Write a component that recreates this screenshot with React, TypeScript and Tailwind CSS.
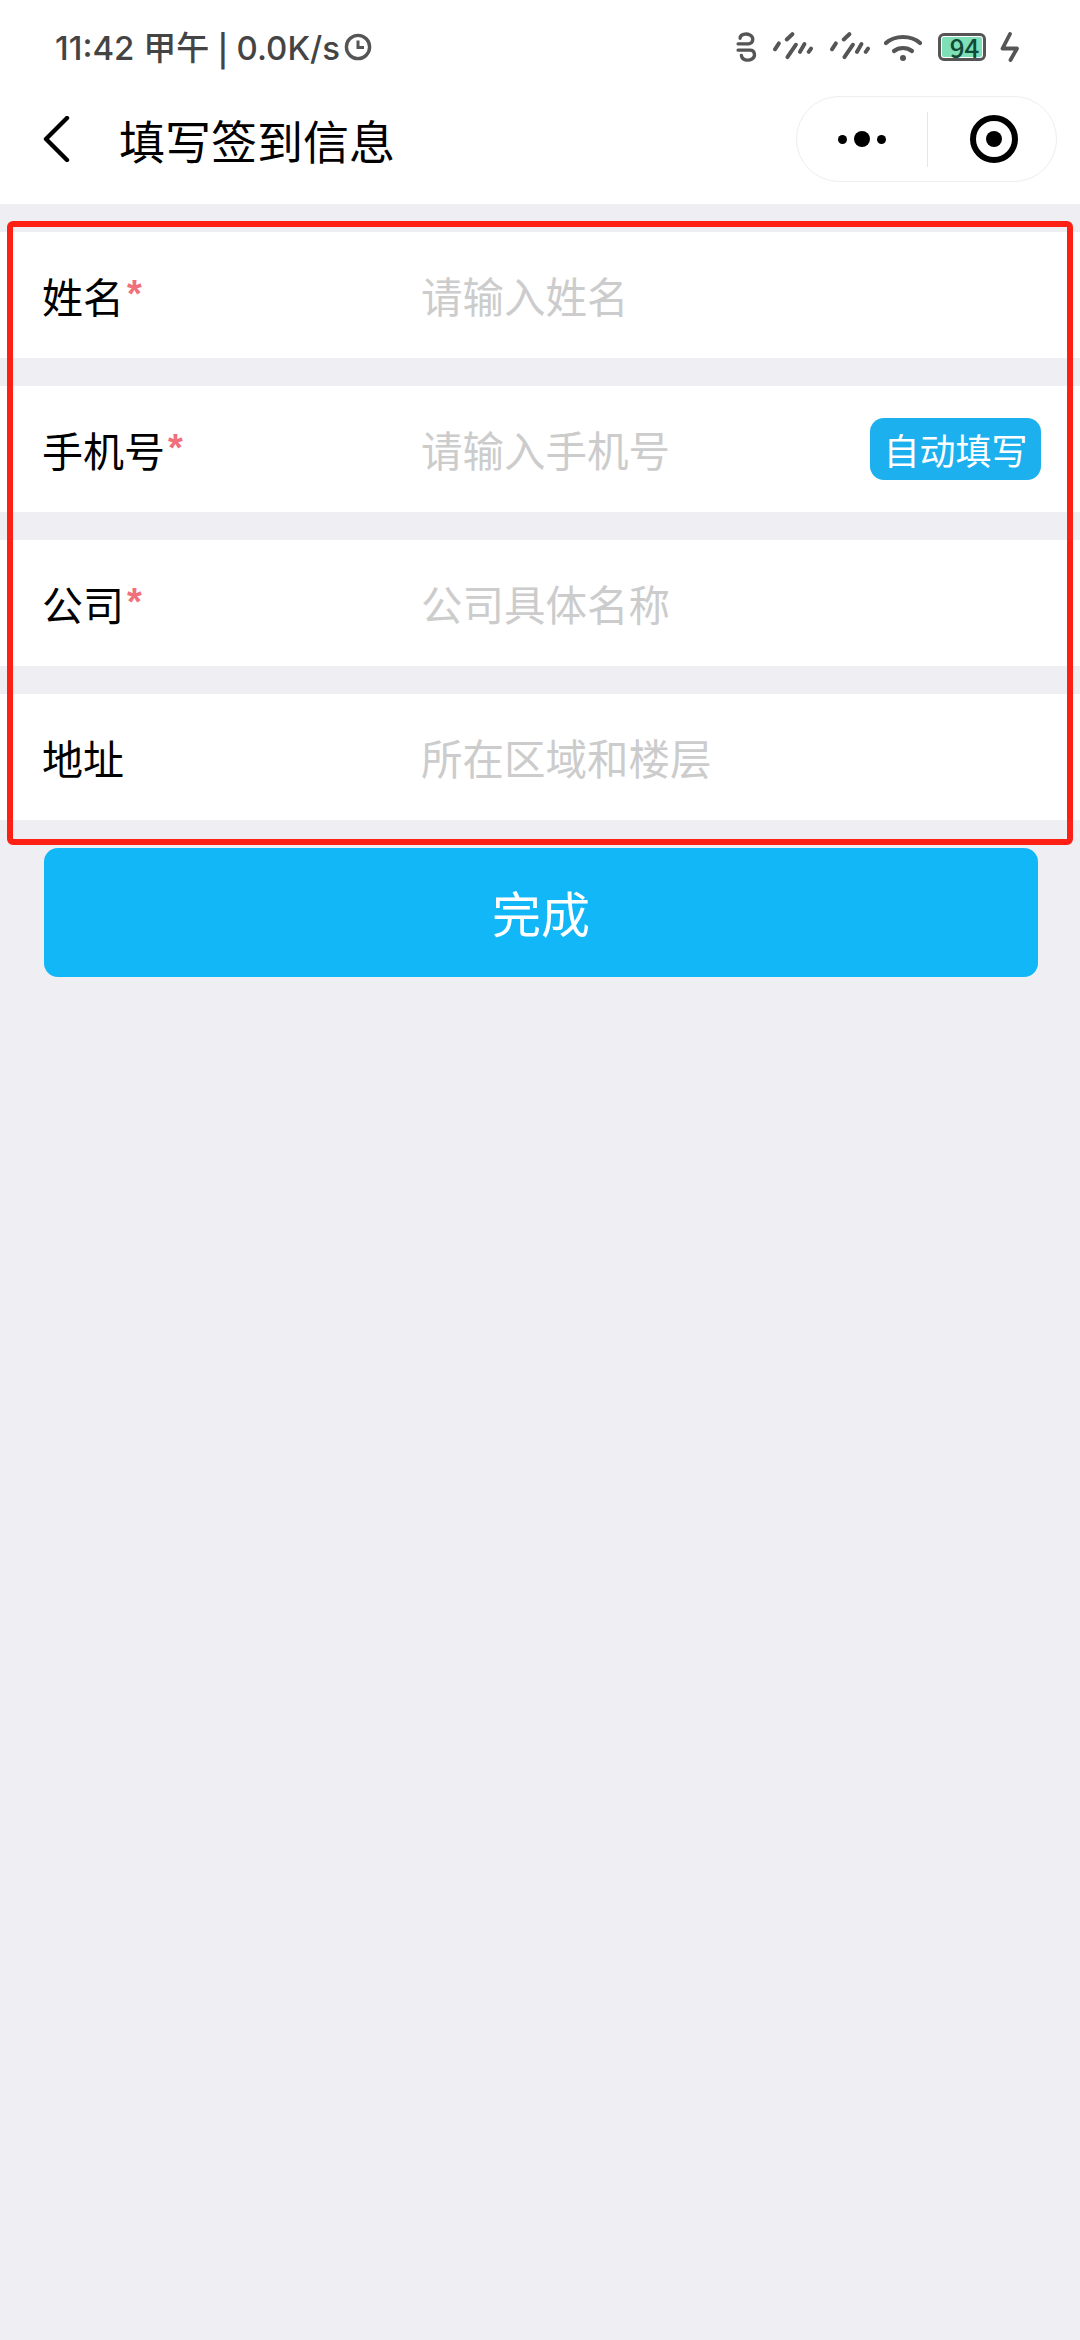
const cjk = "font-['Noto_Sans_CJK_SC','Noto_Sans',sans-serif]";

function Signal() {
  return (
    <svg width="41" height="30" viewBox="145 40 125 90" fill="none" stroke="#555" strokeWidth="12" strokeLinecap="round">
      <path d="M154 92L166 74" />
      <path d="M190 62L207 46" />
      <path d="M192 116L218 78" />
      <path d="M230 100L244 76" />
      <path d="M257 100L264 90" />
    </svg>
  );
}

function Row({ label, required, placeholder, action }: { label: string; required?: boolean; placeholder: string; action?: string }) {
  return (
    <div className="flex h-[126px] items-center bg-white pl-[42px] pr-[39px]">
      <div className="flex w-[379px] items-center text-[41px] leading-none text-black">
        <span>{label}</span>
        {required && <span className="ml-[3px] mt-[-2px] font-['Liberation_Sans',sans-serif] text-[38px] font-bold leading-none text-[#f0707c]">*</span>}
      </div>
      <div className="flex-1 pt-[2px] text-[41.5px] leading-none text-[#cccccc]">{placeholder}</div>
      {action && (
        <div className="flex h-[62px] w-[171px] items-center justify-center rounded-[14px] bg-[#1cb0ef] text-[36px] leading-none text-white">{action}</div>
      )}
    </div>
  );
}

export default function App() {
  return (
    <div className={`relative min-h-[2340px] w-[1080px] overflow-hidden bg-[#eeeef3] ${cjk}`}>
      <header className="h-[204px] bg-white">
        <div className="flex h-[96px] items-center justify-between pl-[55px] pr-[60px] pb-[2px] text-[#444444]">
          <div className="flex items-center font-['Inter','Noto_Sans_CJK_SC',sans-serif] text-[33px] font-medium leading-none">
            <span>11:42 甲午 <span className="font-['Noto_Sans_CJK_SC',sans-serif] font-bold">|</span> 0.0K/s</span>
            <svg className="ml-[3px]" width="30" height="30" viewBox="0 0 30 30" fill="none" stroke="#555" strokeWidth="3.4">
              <circle cx="15" cy="15" r="11.6" />
              <path d="M15 8.5V15.5H21" strokeWidth="3" />
            </svg>
          </div>
          <div className="flex items-center">
            <svg width="24" height="33" viewBox="35 30 72 100" fill="none" stroke="#555" strokeWidth="10" strokeLinecap="round">
              <path d="M50 52C50 40 68 36 80 42C92 48 92 66 76 69H44" />
              <path d="M44 88H80C96 88 98 108 86 115C74 122 56 118 54 104" />
            </svg>
            <div className="ml-[13px]"><Signal /></div>
            <div className="ml-[16px]"><Signal /></div>
            <svg className="ml-[14px]" width="38" height="30" viewBox="0 0 38 30" fill="none" stroke="#555" strokeWidth="4.2" strokeLinecap="round">
              <path d="M2 11C11 3 27 3 36 11" />
              <path d="M10 19C15 15 23 15 28 19" />
              <circle cx="19" cy="26" r="3" fill="#555" stroke="none" />
            </svg>
            <div className="ml-[16px] h-[28px] w-[48px] rounded-[6px] border-[3px] border-[#555] bg-white p-[1px]">
              <div className="flex h-full items-center justify-center rounded-[2px] bg-[#7fe0b8] pl-[5px] text-[26px] font-medium leading-none text-[#114a35]">94</div>
            </div>
            <svg className="ml-[14px]" width="20" height="30" viewBox="0 0 20 30" fill="none" stroke="#555" strokeWidth="3.8" strokeLinecap="round" strokeLinejoin="round">
              <path d="M10 2L2.5 16.5H17L10.5 28" />
            </svg>
          </div>
        </div>
        <div className="flex h-[86px] items-center pl-[43px] pr-[23px]">
          <svg width="28" height="46" viewBox="0 0 28 46" fill="none" stroke="#000" strokeWidth="4.4" strokeLinecap="round" strokeLinejoin="round">
            <path d="M24 2L3 23L24 44" />
          </svg>
          <div className="ml-[48px] flex-1 text-[46px] leading-none text-black">填写签到信息</div>
          <div className="flex h-[86px] w-[261px] items-center rounded-full border border-[#eeeeee]">
            <div className="flex w-[130px] items-center justify-center gap-[7px]">
              <span className="h-[9px] w-[9px] rounded-full bg-black" />
              <span className="h-[16px] w-[16px] rounded-full bg-black" />
              <span className="h-[9px] w-[9px] rounded-full bg-black" />
            </div>
            <div className="h-[55px] w-px bg-[#e6e6e6]" />
            <div className="flex flex-1 items-center justify-center pl-[3px]">
              <div className="flex h-[48px] w-[48px] items-center justify-center rounded-full border-[6px] border-black">
                <span className="h-[16px] w-[16px] rounded-full bg-black" />
              </div>
            </div>
          </div>
        </div>
      </header>

      <main className="flex flex-col gap-[28px] pt-[28px]">
        <Row label="姓名" required placeholder="请输入姓名" />
        <Row label="手机号" required placeholder="请输入手机号" action="自动填写" />
        <Row label="公司" required placeholder="公司具体名称" />
        <Row label="地址" placeholder="所在区域和楼层" />
      </main>

      <div className="ml-[44px] mt-[28px] flex h-[129px] w-[994px] items-center justify-center rounded-[14px] bg-[#12b7f7] pb-[2px] text-[49px] leading-none text-white">完成</div>

      <div className="absolute left-[7px] top-[221px] h-[624px] w-[1066px] rounded-[6px] border-[6px] border-[#ff2015]" />
    </div>
  );
}
